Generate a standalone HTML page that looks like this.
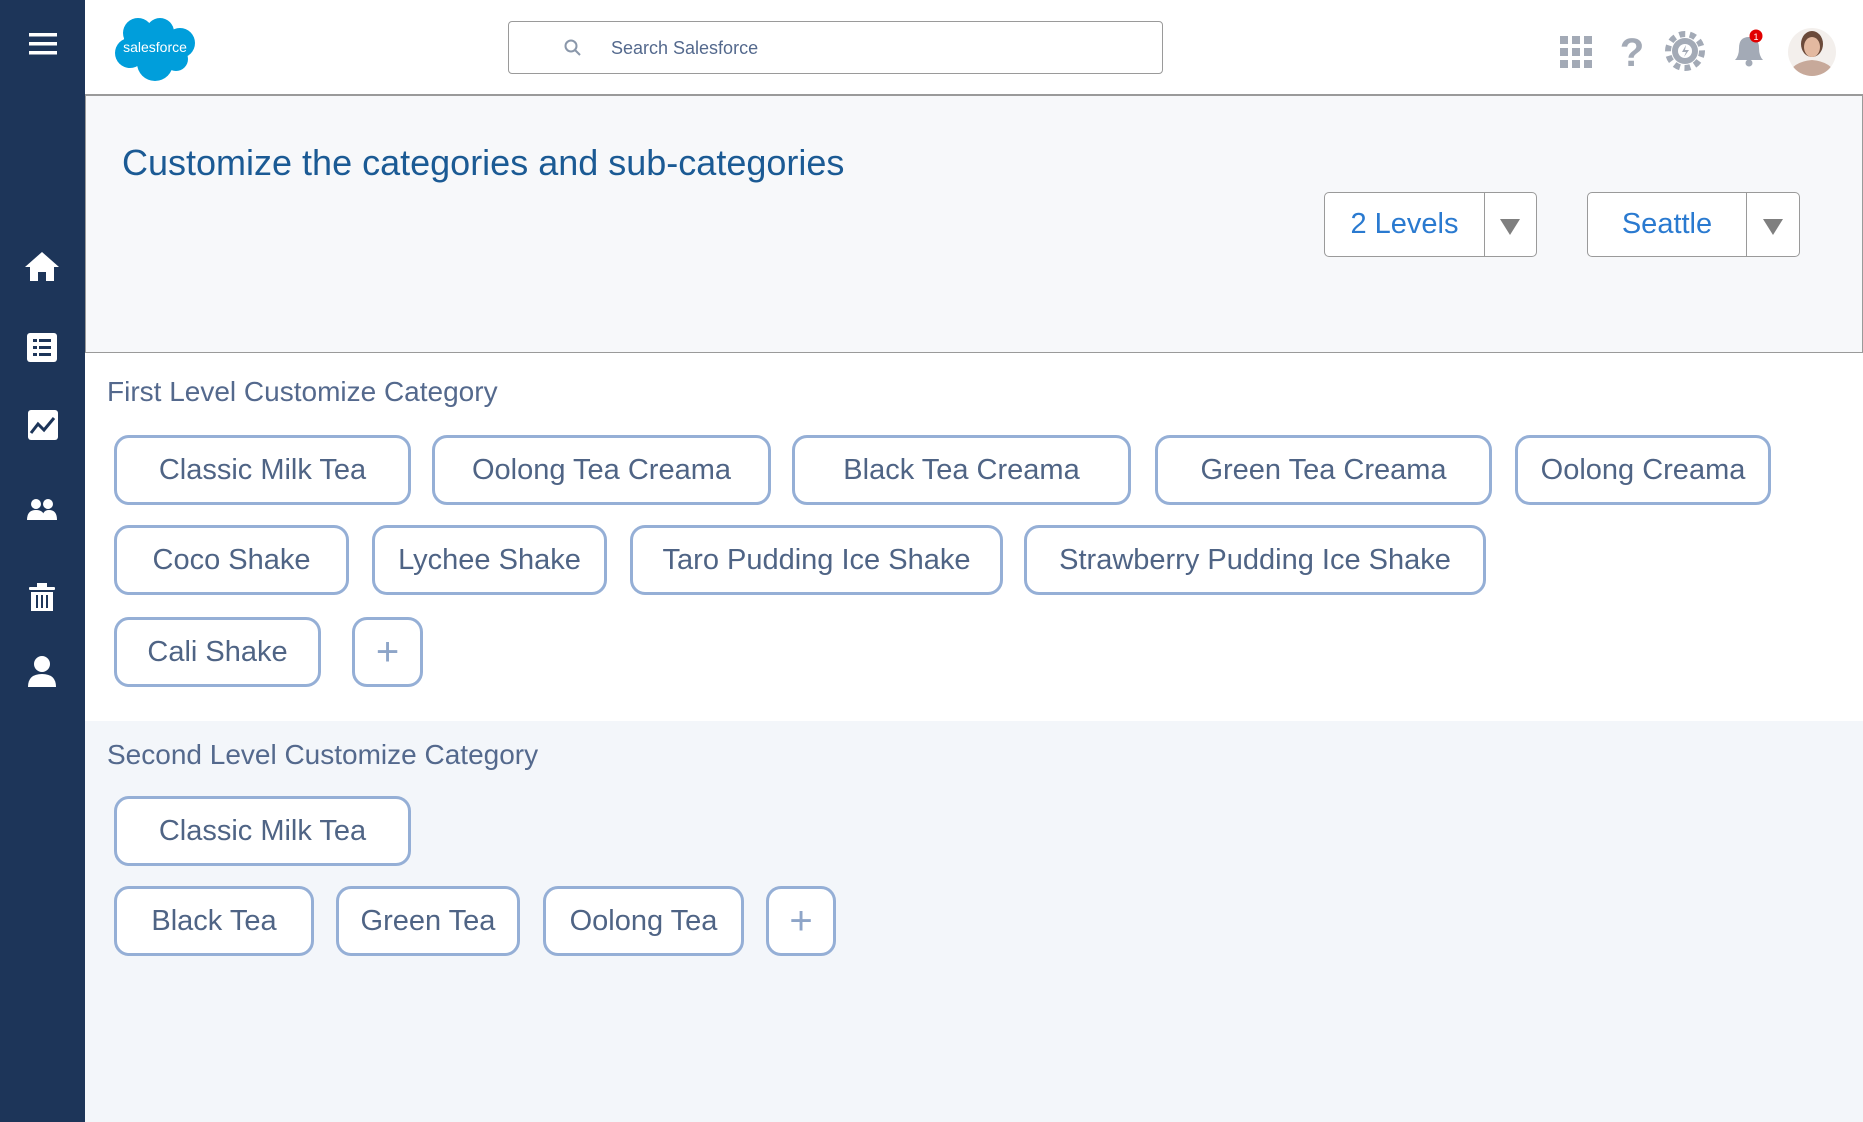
<!DOCTYPE html>
<html><head><meta charset="utf-8"><style>
*{margin:0;padding:0;box-sizing:border-box}
body{width:1863px;height:1122px;position:relative;overflow:hidden;background:#f3f6fa;font-family:"Liberation Sans",sans-serif}
.side{position:absolute;left:0;top:0;width:85px;height:1122px;background:#1d3559}
.hdr{position:absolute;left:85px;top:0;right:0;height:96px;background:#fff;border-bottom:2px solid #9a9a9a}
.search{position:absolute;left:423px;top:21px;width:655px;height:53px;border:1px solid #9a9a9a;border-radius:4px;background:#fff}
.search span{position:absolute;left:102px;top:16px;font-size:18px;color:#54698d}
.panel{position:absolute;left:85px;top:96px;width:1778px;height:257px;background:#f7f8fa;border:1px solid #9a9a9a;border-top:none}
.title{position:absolute;left:122px;top:142px;font-size:36px;color:#1b5a94}
.dd{position:absolute;height:65px;border:1.5px solid #9a9a9a;border-radius:5px;background:#fff}
.dd .t{position:absolute;left:0;top:0;height:100%;display:flex;align-items:center;justify-content:center;font-size:29px;color:#2a7ad0}
.dd .d{position:absolute;top:0;bottom:0;border-left:1.5px solid #9a9a9a}
.dd .a{position:absolute;top:26px;width:0;height:0;border-left:10px solid transparent;border-right:10px solid transparent;border-top:16px solid #7f7f7f}
.white{position:absolute;left:85px;top:353px;width:1778px;height:368px;background:#fff}
.lbl{position:absolute;left:107px;font-size:28px;color:#54698d}
.chip{position:absolute;height:70px;border:3px solid #95afd6;border-radius:15px;background:#fff;display:flex;align-items:center;justify-content:center;font-size:29px;color:#4f6485;white-space:nowrap}
.plus{font-size:40px;color:#8ea5c8;font-weight:300}
</style></head><body>
<div class="side">
<svg width="85" height="720" style="position:absolute;left:0;top:0" fill="#fff">
<rect x="29" y="33" width="28" height="3.5"/><rect x="29" y="42" width="28" height="3.5"/><rect x="29" y="51" width="28" height="3.5"/>
<path d="M42 252 L25 267 H30 V281 H38 V272 H46 V281 H54 V267 H59 Z"/>
<rect x="27" y="333" width="30" height="29" rx="3"/>
<g fill="#1d3559"><rect x="33" y="339" width="4" height="3"/><rect x="39" y="339" width="12" height="3"/><rect x="33" y="346" width="4" height="3"/><rect x="39" y="346" width="12" height="3"/><rect x="33" y="353" width="4" height="3"/><rect x="39" y="353" width="12" height="3"/></g>
<rect x="28" y="410" width="30" height="30" rx="3"/>
<path d="M31 433 L38 424 L44 430 L54 418" stroke="#1d3559" stroke-width="3" fill="none"/>
<circle cx="36" cy="504" r="5"/><circle cx="48" cy="504" r="5"/><path d="M27 520 Q27 510 36 510 Q45 510 45 520Z"/><path d="M42 520 Q42 510 49 510 Q57 510 57 520Z"/>
<rect x="29" y="587" width="26" height="3" rx="1"/><rect x="37" y="583" width="10" height="4"/><path d="M31 592 H53 V611 H31Z"/>
<g fill="#1d3559"><rect x="36" y="595" width="2" height="13"/><rect x="41" y="595" width="2" height="13"/><rect x="46" y="595" width="2" height="13"/></g>
<circle cx="42" cy="664" r="8"/><path d="M28 687 Q28 674 42 674 Q56 674 56 687Z"/>
</svg></div>
<div class="hdr">
<svg width="100" height="70" style="position:absolute;left:25px;top:15px">
<g fill="#009edb"><circle cx="28" cy="18" r="15"/><circle cx="50" cy="17" r="14"/><circle cx="70" cy="28" r="15"/><circle cx="20" cy="38" r="15"/><circle cx="45" cy="48" r="18"/><circle cx="66" cy="44" r="12"/><rect x="14" y="20" width="60" height="28"/></g>
<text x="45" y="37" fill="#fff" font-size="14" text-anchor="middle" font-family="Liberation Sans">salesforce</text></svg>
<div class="search"><svg width="20" height="20" style="position:absolute;left:54px;top:16px"><circle cx="8" cy="8" r="5.5" stroke="#8a97aa" stroke-width="2" fill="none"/><path d="M12 12 L17 17" stroke="#8a97aa" stroke-width="2"/></svg><span>Search Salesforce</span></div>
<svg width="300" height="96" style="position:absolute;left:1470px;top:0">
<g fill="#a3aab6"><rect x="5" y="36" width="8" height="8"/><rect x="17" y="36" width="8" height="8"/><rect x="29" y="36" width="8" height="8"/><rect x="5" y="48" width="8" height="8"/><rect x="17" y="48" width="8" height="8"/><rect x="29" y="48" width="8" height="8"/><rect x="5" y="60" width="8" height="8"/><rect x="17" y="60" width="8" height="8"/><rect x="29" y="60" width="8" height="8"/></g>
<text x="77" y="66" font-size="40" fill="#a3aab6" text-anchor="middle" font-weight="bold" font-family="Liberation Sans">?</text>
<circle cx="130" cy="51" r="13" fill="#a3aab6"/><circle cx="130" cy="51" r="17" fill="none" stroke="#a3aab6" stroke-width="6" stroke-dasharray="6 4.6"/><circle cx="130" cy="51" r="7" fill="#fff"/><path d="M131 45 L127 52 H131 L129 57 L134 50 H130Z" fill="#a3aab6"/>
<path d="M180 60 Q184 56 184 48 Q184 37 194 37 Q204 37 204 48 Q204 56 208 60Z" fill="#a3aab6"/><circle cx="194" cy="63" r="3.5" fill="#a3aab6"/>
<circle cx="201" cy="36" r="6.5" fill="#e10000"/><text x="201" y="40" font-size="9" fill="#fff" text-anchor="middle" font-family="Liberation Sans">1</text>
<defs><clipPath id="av"><circle cx="257" cy="52" r="24"/></clipPath></defs>
<g clip-path="url(#av)"><rect x="231" y="26" width="52" height="52" fill="#f3efec"/><path d="M233 78 Q235 62 257 60 Q279 62 281 78Z" fill="#c7a99a"/><ellipse cx="257" cy="44" rx="11" ry="13" fill="#6b4a3a"/><ellipse cx="257" cy="47" rx="8" ry="10" fill="#e3b9a0"/></g>
</svg>
</div>
<div class="panel"></div>
<div class="title">Customize the categories and sub-categories</div>
<div class="dd" style="left:1324px;top:192px;width:213px"><div class="t" style="width:159px">2 Levels</div><div class="d" style="left:159px"></div><div class="a" style="left:175px"></div></div>
<div class="dd" style="left:1587px;top:192px;width:213px"><div class="t" style="width:158px">Seattle</div><div class="d" style="left:158px"></div><div class="a" style="left:175px"></div></div>
<div class="white"></div>
<div class="lbl" style="top:376px">First Level Customize Category</div>
<div class="chip" style="left:114px;top:435px;width:297px">Classic Milk Tea</div>
<div class="chip" style="left:432px;top:435px;width:339px">Oolong Tea Creama</div>
<div class="chip" style="left:792px;top:435px;width:339px">Black Tea Creama</div>
<div class="chip" style="left:1155px;top:435px;width:337px">Green Tea Creama</div>
<div class="chip" style="left:1515px;top:435px;width:256px">Oolong Creama</div>
<div class="chip" style="left:114px;top:525px;width:235px">Coco Shake</div>
<div class="chip" style="left:372px;top:525px;width:235px">Lychee Shake</div>
<div class="chip" style="left:630px;top:525px;width:373px">Taro Pudding Ice Shake</div>
<div class="chip" style="left:1024px;top:525px;width:462px">Strawberry Pudding Ice Shake</div>
<div class="chip" style="left:114px;top:617px;width:207px">Cali Shake</div>
<div class="chip plus" style="left:352px;top:617px;width:71px">+</div>
<div class="lbl" style="top:739px">Second Level Customize Category</div>
<div class="chip" style="left:114px;top:796px;width:297px">Classic Milk Tea</div>
<div class="chip" style="left:114px;top:886px;width:200px">Black Tea</div>
<div class="chip" style="left:336px;top:886px;width:184px">Green Tea</div>
<div class="chip" style="left:543px;top:886px;width:201px">Oolong Tea</div>
<div class="chip plus" style="left:766px;top:886px;width:70px">+</div>
</body></html>
